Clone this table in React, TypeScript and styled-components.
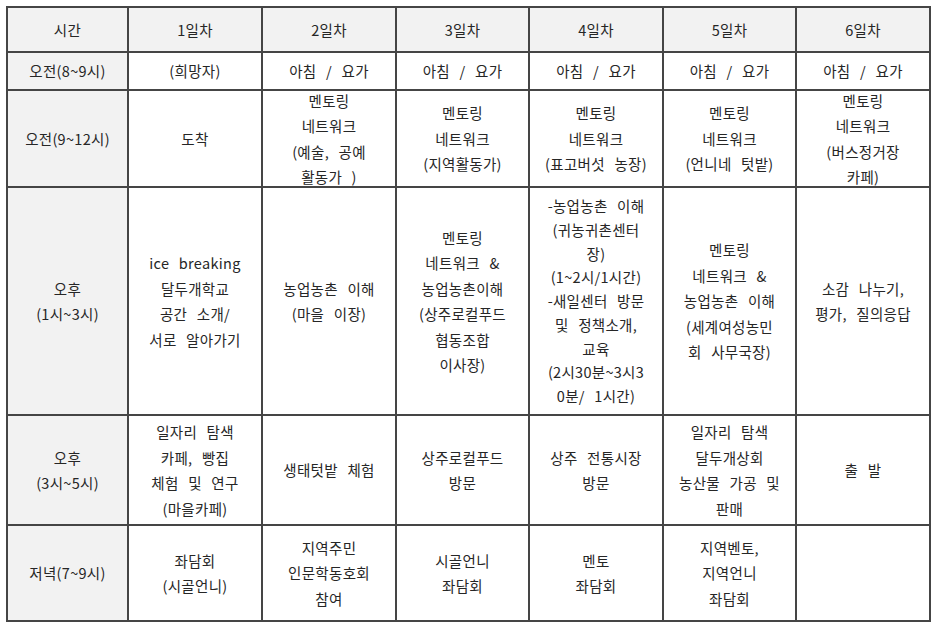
import React from "react"
import styled, { createGlobalStyle } from "styled-components"

const GlobalStyle = createGlobalStyle`
    html, body {
        margin: 0;
        padding: 0;
        background: #fff;
    }
    body {
        font-family: "Noto Sans CJK KR", "Noto Sans", sans-serif;
    }
`

type Row = { time: string[]; height: number; cells: string[][] }

const days = ["1일차", "2일차", "3일차", "4일차", "5일차", "6일차"]
const colWidths = [121, 134, 134, 133, 134, 133, 134]

const yoga = ["아침 / 요가"]
const rows: Row[] = [
    { time: ["오전(8~9시)"], height: 38, cells: [["(희망자)"], yoga, yoga, yoga, yoga, yoga] },
    {
        time: ["오전(9~12시)"],
        height: 97,
        cells: [
            ["도착"],
            ["멘토링", "네트워크", "(예술, 공예", "활동가 )"],
            ["멘토링", "네트워크", "(지역활동가)"],
            ["멘토링", "네트워크", "(표고버섯 농장)"],
            ["멘토링", "네트워크", "(언니네 텃밭)"],
            ["멘토링", "네트워크", "(버스정거장", "카페)"],
        ],
    },
    {
        time: ["오후", "(1시~3시)"],
        height: 228,
        cells: [
            ["ice breaking", "달두개학교", "공간 소개/", "서로 알아가기"],
            ["농업농촌 이해", "(마을 이장)"],
            ["멘토링", "네트워크 &", "농업농촌이해", "(상주로컬푸드", "협동조합", "이사장)"],
            [
                "-농업농촌 이해",
                "(귀농귀촌센터",
                "장)",
                "(1~2시/1시간)",
                "-새일센터 방문",
                "및 정책소개,",
                "교육",
                "(2시30분~3시3",
                "0분/ 1시간)",
            ],
            ["멘토링", "네트워크 &", "농업농촌 이해", "(세계여성농민", "회 사무국장)"],
            ["소감 나누기,", "평가, 질의응답"],
        ],
    },
    {
        time: ["오후", "(3시~5시)"],
        height: 110,
        cells: [
            ["일자리 탐색", "카페, 빵집", "체험 및 연구", "(마을카페)"],
            ["생태텃밭 체험"],
            ["상주로컬푸드", "방문"],
            ["상주 전통시장", "방문"],
            ["일자리 탐색", "달두개상회", "농산물 가공 및", "판매"],
            ["출 발"],
        ],
    },
    {
        time: ["저녁(7~9시)"],
        height: 96,
        cells: [
            ["좌담회", "(시골언니)"],
            ["지역주민", "인문학동호회", "참여"],
            ["시골언니", "좌담회"],
            ["멘토", "좌담회"],
            ["지역벤토,", "지역언니", "좌담회"],
            [],
        ],
    },
]

const Lines: React.FC<{ lines: string[]; tight?: boolean }> = ({ lines, tight }) => (
    <Content $tight={tight}>
        {lines.map((l, i) => (
            <React.Fragment key={i}>
                {i > 0 && <br />}
                {l}
            </React.Fragment>
        ))}
    </Content>
)

const App: React.FC = () => (
    <>
        <GlobalStyle />
        <Page>
            <Schedule>
                <colgroup>
                    {colWidths.map((w, i) => (
                        <col key={i} style={{ width: w }} />
                    ))}
                </colgroup>
                <thead>
                    <HeadRow>
                        <HeadCell>시간</HeadCell>
                        {days.map(d => (
                            <HeadCell key={d}>{d}</HeadCell>
                        ))}
                    </HeadRow>
                </thead>
                <tbody>
                    {rows.map((r, i) => (
                        <tr key={i} style={{ height: r.height }}>
                            <TimeCell>
                                <Lines lines={r.time} />
                            </TimeCell>
                            {r.cells.map((c, j) => (
                                <Cell key={j}>
                                    <Lines lines={c} tight={c.length > 6} />
                                </Cell>
                            ))}
                        </tr>
                    ))}
                </tbody>
            </Schedule>
        </Page>
    </>
)

const Page = styled.div`
    padding: 6px 0 0 6px;
`

const Schedule = styled.table`
    border-collapse: collapse;
    table-layout: fixed;
    width: 924px;
    color: #262626;
    font-size: 14.5px;
    letter-spacing: 0.3px;
    word-spacing: 6px;
`

const HeadRow = styled.tr`
    height: 45px;
`

// negative margins let long text run into the borders, as in the original
const Content = styled.div<{ $tight?: boolean }>`
    margin: -8px 0;
    line-height: ${({ $tight }) => ($tight ? "23.8px" : "25.5px")};
`

const BaseCell = `
    border: 2px solid #454545;
    text-align: center;
    vertical-align: middle;
    padding: 0 2px;
    white-space: nowrap;
`

const HeadCell = styled.th`
    ${BaseCell}
    font-weight: 400;
    line-height: 25px;
    background: #f2f2f2;
`

const TimeCell = styled.td`
    ${BaseCell}
    background: #f2f2f2;
`

const Cell = styled.td`
    ${BaseCell}
    background: #fff;
`

export default App
